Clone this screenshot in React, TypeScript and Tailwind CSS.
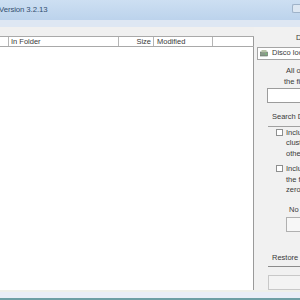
import React from "react";

const font = { fontFamily: '"Liberation Sans", Arial, sans-serif' };

function DriveIcon() {
  return (
    <svg width="9" height="8" viewBox="0 0 9 8" className="shrink-0">
      <rect x="0.5" y="3" width="7" height="4" fill="#8a9a8a" stroke="#5d6b5d" strokeWidth="0.6" />
      <rect x="1.5" y="1" width="5" height="2.4" fill="#b8c4a8" />
      <rect x="5.5" y="4.3" width="1.3" height="1.3" fill="#6fd06f" />
    </svg>
  );
}

function Check() {
  return <div className="mt-[1px] h-[7px] w-[7px] shrink-0 border border-[#8e8f8f] bg-white" />;
}

export default function App() {
  return (
    <div
      className="flex h-[300px] w-[300px] flex-col overflow-hidden bg-[#f0f0f0] text-[7.5px] text-[#3a3a3a]"
      style={font}
    >
      {/* title bar */}
      <div className="flex h-[20px] shrink-0 items-center justify-between bg-gradient-to-b from-[#cddff2] to-[#bcd3ec]">
        <span className="-ml-[1px] pb-[1px] text-[7.8px] tracking-[-0.1px] text-[#34506f]">Version 3.2.13</span>
        <div className="mb-[4px] h-[9px] w-[8px] rounded-l-[2px] border border-r-0 border-[#9fb3c9] bg-[#dde7f2]" />
      </div>
      <div className="h-[7px] shrink-0 bg-[#dee7f3]" />

      <div className="flex min-h-0 flex-1">
        {/* list */}
        <div className="flex w-[254px] shrink-0 flex-col pt-[9px]">
          <div className="flex h-[11px] shrink-0 items-center border-y border-[#a9a9a9] bg-white leading-none">
            <div className="h-full w-[9px] border-r border-[#b5b5b5]" />
            <div className="flex h-full w-[110px] items-center border-r border-[#b5b5b5] pl-[2px]">In Folder</div>
            <div className="flex h-full w-[35px] items-center justify-end border-r border-[#b5b5b5] pr-[2px]">Size</div>
            <div className="flex h-full w-[59px] items-center border-r border-[#b5b5b5] pl-[3px]">Modified</div>
            <div className="h-full flex-1 border-r border-[#9a9a9a]" />
          </div>
          <div className="flex-1 border-r border-[#9a9a9a] bg-white" />
        </div>

        {/* side panel */}
        <div className="flex min-w-0 flex-1 flex-col whitespace-nowrap bg-[#f1f1f1] leading-[10.5px]">
          <div className="mt-[6px] pl-[42px]">Drive:</div>
          <div className="ml-[3px] mt-[3px] flex h-[14px] items-center gap-[3px] border border-r-0 border-[#a5a5a5] bg-white pl-[2px]">
            <DriveIcon />
            <span>Disco locale</span>
          </div>
          <div className="mt-[6px] pl-[32px]">All or part</div>
          <div className="pl-[30px]">the file name:</div>
          <div className="ml-[13px] mt-[1px] h-[15px] border border-r-0 border-[#9c9c9c] bg-white" />
          <div className="mt-[9px] pl-[18px]">Search Drive</div>
          <div className="ml-[14px] mt-[3px] h-[1px] bg-[#a0a0a0]" />
          <div className="mt-[1px] flex gap-[3px] pl-[22px]">
            <Check />
            <div>
              <div>Include</div>
              <div>clusters</div>
              <div>other</div>
            </div>
          </div>
          <div className="mt-[5px] flex gap-[3px] pl-[22px]">
            <Check />
            <div>
              <div>Include</div>
              <div>the file</div>
              <div>zero</div>
            </div>
          </div>
          <div className="mt-[9px] pl-[35px]">No</div>
          <div className="ml-[32px] mt-[2px] h-[15px] border border-r-0 border-[#b0b0b0] bg-[#f7f7f7]" />
          <div className="mt-[21px] pl-[18px]">Restore</div>
          <div className="ml-[14px] mt-[3px] h-[1px] bg-[#8c8c8c]" />
          <div className="ml-[14px] mt-[8px] h-[15px] border border-r-0 border-[#c8c8c8] bg-[#f3f3f3]" />
          <div className="flex-1" />
        </div>
      </div>

      <div className="h-[2px] shrink-0 bg-[#eeefe9]" />
      <div className="h-[6px] shrink-0 bg-[#e9edf6]" />
      <div className="h-[2px] shrink-0 bg-[#6e9ea4]" />
    </div>
  );
}
